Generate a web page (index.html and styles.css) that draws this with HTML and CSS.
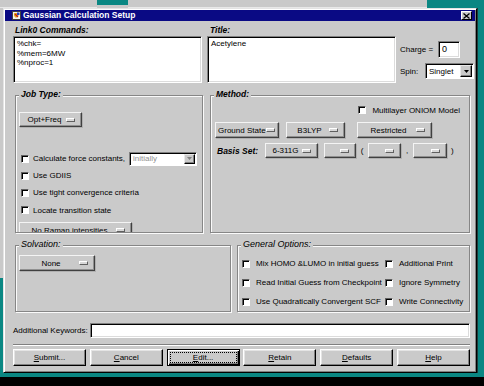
FILE: index.html
```html
<!DOCTYPE html>
<html>
<head>
<meta charset="utf-8">
<link rel="stylesheet" href="styles.css">
</head>
<body>
<div class="desktop">
  <div class="top-strip">
    <span class="ts-a"></span><span class="ts-b"></span><span class="ts-c"></span><span class="ts-d"></span>
  </div>
  <div class="middle">
    <div class="left-strip"></div>
    <div class="window">
      <div class="titlebar">
        <svg class="app-icon" width="9" height="9" viewBox="0 0 9 9">
          <rect x="0" y="0" width="9" height="9" fill="#f4f4f4"/>
          <rect x="0.5" y="0.5" width="8" height="8" fill="none" stroke="#404040" stroke-width="1"/>
          <path d="M2 2 L5 2 L7 4 L4 7 L2 5 Z" fill="#e8b020"/>
          <path d="M3 3 L6 6" stroke="#c01818" stroke-width="1.2"/>
          <rect x="5" y="1.5" width="2.5" height="2.5" fill="#2040c0"/>
        </svg>
        <span class="title">Gaussian Calculation Setup</span>
        <span class="close">
          <svg width="7" height="6" viewBox="0 0 7 6"><path d="M0.5 0.5 L6.5 5.5 M6.5 0.5 L0.5 5.5" stroke="#000" stroke-width="1.3"/></svg>
        </span>
      </div>

      <div class="top-section">
        <div class="text-col">
          <div class="lbl">Link0 Commands:</div>
          <div class="textarea">%chk=<br>%mem=6MW<br>%nproc=1</div>
        </div>
        <div class="text-col">
          <div class="lbl">Title:</div>
          <div class="textarea">Acetylene</div>
        </div>
        <div class="charge-col">
          <div class="charge-row"><span class="charge-lbl">Charge =</span><span class="field charge-in">0</span></div>
          <div class="spin-row"><span class="spin-lbl">Spin:</span>
            <span class="combo spin"><span class="combo-text">Singlet</span><span class="combo-btn"><svg width="5" height="3" viewBox="0 0 5 3"><path d="M0 0 H5 L2.5 3 Z" fill="#000"/></svg></span></span>
          </div>
        </div>
      </div>

      <div class="mid-section">
        <div class="group job">
          <div class="legend">Job Type:</div>
          <div class="job-body">
            <div class="opt opt-freq"><span class="opt-text">Opt+Freq</span><span class="ind"></span></div>
            <div class="check-row first">
              <span class="cb"></span><span class="cb-lbl">Calculate force constants,</span>
              <span class="combo initially"><span class="combo-text">initially</span><span class="combo-btn dis"><svg width="5" height="3" viewBox="0 0 5 3"><path d="M0 0 H5 L2.5 3 Z" fill="#808080"/></svg></span></span>
            </div>
            <div class="check-row"><span class="cb"></span><span class="cb-lbl">Use GDIIS</span></div>
            <div class="check-row"><span class="cb"></span><span class="cb-lbl">Use tight convergence criteria</span></div>
            <div class="check-row tall"><span class="cb"></span><span class="cb-lbl">Locate transition state</span></div>
            <div class="opt raman"><span class="opt-text">No Raman intensities</span><span class="ind"></span></div>
          </div>
        </div>
        <div class="group method">
          <div class="legend">Method:</div>
          <div class="onion-row"><span class="cb"></span><span class="cb-lbl">Multilayer ONIOM Model</span></div>
          <div class="method-row">
            <div class="opt ground"><span class="opt-text">Ground State</span><span class="ind"></span></div>
            <div class="opt b3lyp"><span class="opt-text">B3LYP</span><span class="ind"></span></div>
            <div class="opt restricted"><span class="opt-text">Restricted</span><span class="ind"></span></div>
          </div>
          <div class="basis-row">
            <span class="basis-lbl">Basis Set:</span>
            <div class="opt b-main"><span class="opt-text">6-311G</span><span class="ind"></span></div>
            <div class="opt b-blank1"><span class="opt-text"></span><span class="ind"></span></div>
            <span class="punct">(</span>
            <div class="opt b-blank2"><span class="opt-text"></span><span class="ind"></span></div>
            <span class="punct">,</span>
            <div class="opt b-blank3"><span class="opt-text"></span><span class="ind"></span></div>
            <span class="punct close-paren">)</span>
          </div>
        </div>
      </div>

      <div class="low-section">
        <div class="group solv">
          <div class="legend light">Solvation:</div>
          <div class="opt none"><span class="opt-text">None</span><span class="ind"></span></div>
        </div>
        <div class="group general">
          <div class="legend light">General Options:</div>
          <div class="gen-grid">
            <div class="gen-cell"><span class="cb"></span><span class="cb-lbl">Mix HOMO &amp;LUMO in initial guess</span></div>
            <div class="gen-cell"><span class="cb"></span><span class="cb-lbl">Additional Print</span></div>
            <div class="gen-cell"><span class="cb"></span><span class="cb-lbl">Read Initial Guess from Checkpoint</span></div>
            <div class="gen-cell"><span class="cb"></span><span class="cb-lbl">Ignore Symmetry</span></div>
            <div class="gen-cell"><span class="cb"></span><span class="cb-lbl">Use Quadratically Convergent SCF</span></div>
            <div class="gen-cell"><span class="cb"></span><span class="cb-lbl">Write Connectivity</span></div>
          </div>
        </div>
      </div>

      <div class="kw-row">
        <span class="kw-lbl">Additional Keywords:</span>
        <span class="field kw-in"></span>
      </div>
      <div class="separator"></div>
      <div class="btn-row">
        <span class="btn"><u>S</u>ubmit...</span>
        <span class="btn"><u>C</u>ancel</span>
        <span class="btn default"><u>E</u>dit...</span>
        <span class="btn"><u>R</u>etain</span>
        <span class="btn"><u>D</u>efaults</span>
        <span class="btn"><u>H</u>elp</span>
      </div>
    </div>
    <div class="right-strip"></div>
  </div>
  <div class="bottom-strip"></div>
</div>
</body>
</html>
```

FILE: styles.css
```css
* { box-sizing: border-box; }
html, body { margin: 0; padding: 0; }
body {
  width: 484px;
  height: 386px;
  overflow: hidden;
  background: #0a8783;
  font-family: "Liberation Sans", Arial, sans-serif;
  font-size: 8px;
  color: #000;
}

.desktop { display: flex; flex-direction: column; width: 484px; height: 386px; }

.top-strip { height: 8px; display: flex; }
.ts-a { width: 97px; background: #c9c9c9; border-bottom: 1px solid #e8e8e8; }
.ts-b { width: 31px; background: #0a8783; border-bottom: 3px solid #c9c9c9; }
.ts-c { width: 299px; background: #c9c9c9; border-bottom: 1px solid #e8e8e8; }
.ts-d { flex: 1; background: #0a8783; }

.middle { display: flex; height: 365px; }
.left-strip { width: 3px; background: linear-gradient(#c9c9c9 0 270px, #0a8783 270px); }
.right-strip { flex: 1; background: #0a8783; border-left: 1px solid #1d3a38; }
.bottom-strip { flex: 1; background: #000; border-top: 4px solid #0a8783; }

.window {
  width: 474px;
  height: 365px;
  background: #cacaca;
  border: 1px solid;
  border-color: #e4e4e4 #000 #000 #e4e4e4;
  box-shadow: inset 1px 1px #fff, inset -1px -1px #808080;
  padding: 1px;
}

.titlebar {
  height: 11px;
  background: #0a0a84;
  display: flex;
  align-items: center;
  padding-left: 7px;
  padding-right: 3px;
}
.app-icon { display: block; flex: none; }
.title {
  color: #fff;
  font-weight: bold;
  font-size: 8.5px;
  margin-left: 2px;
  flex: 1;
  line-height: 11px;
}
.close {
  width: 11px;
  height: 9px;
  background: #cacaca;
  border: 1px solid;
  border-color: #fff #000 #000 #fff;
  display: flex;
  align-items: center;
  justify-content: center;
}
.close svg { display: block; }

/* top */
.top-section { display: flex; margin-top: 3px; padding-left: 8px; }
.text-col { width: 189px; }
.text-col + .text-col { margin-left: 5px; }
.lbl, .legend, .basis-lbl {
  font-weight: bold;
  font-style: italic;
  font-size: 8.5px;
}
.lbl { height: 12px; line-height: 12px; padding-left: 2px; }
.text-col + .text-col .lbl { padding-left: 3px; }
.textarea {
  height: 47px;
  background: #fff;
  border: 1px solid;
  border-color: #808080 #fff #fff #808080;
  box-shadow: inset 1px 1px #000, inset -1px -1px #dcdcdc;
  padding: 2px 3px;
  line-height: 9.5px;
}

.field {
  background: #fff;
  border: 1px solid;
  border-color: #808080 #fff #fff #808080;
  box-shadow: inset 1px 1px #000, inset -1px -1px #dcdcdc;
}

.charge-col { margin-left: 4px; margin-top: 17px; }
.charge-row, .spin-row { display: flex; align-items: center; }
.charge-lbl { width: 38px; }
.charge-in { width: 22px; height: 17px; padding: 0 3px; line-height: 15px; font-size: 9px; }
.spin-row { margin-top: 5px; }
.spin-lbl { width: 25px; }

.combo {
  display: flex;
  align-items: stretch;
  background: #fff;
  border: 1px solid;
  border-color: #808080 #fff #fff #808080;
  box-shadow: inset 1px 1px #000;
  padding: 1px;
}
.combo-text { flex: 1; padding-left: 2px; display: flex; align-items: center; }
.combo-btn {
  width: 12px;
  background: #cacaca;
  border: 1px solid;
  border-color: #e8e8e8 #000 #000 #e8e8e8;
  box-shadow: inset -1px -1px #808080;
  display: flex;
  align-items: center;
  justify-content: center;
}
.combo-btn svg { display: block; }
.spin { width: 49px; height: 16px; }

/* groups */
.group {
  border: 1px solid #868686;
  box-shadow: inset 1px 1px #fafafa, 1px 1px #fafafa;
}
.legend {
  width: fit-content;
  margin: -7px 0 0 3px;
  padding: 0 2px;
  line-height: 10px;
  height: 10px;
  background: #cacaca;
}
.legend.light { font-weight: normal; font-size: 9px; }

.mid-section { display: flex; margin-top: 12px; padding-left: 10px; }
.job { width: 188px; height: 138px; }
.method { width: 260px; height: 138px; margin-left: 7px; }

.job-body { height: 133px; overflow: hidden; padding-left: 3px; }

.opt {
  display: flex;
  align-items: center;
  background: #cacaca;
  border: 1px solid;
  border-color: #f4f4f4 #404040 #404040 #f4f4f4;
  box-shadow: inset -1px -1px #909090, 1px 1px #b0b0b0;
  padding: 0 6px 0 3px;
}
.opt-text { flex: 1; text-align: center; white-space: nowrap; }
.ind {
  width: 9px;
  height: 4px;
  flex: none;
  border: 1px solid;
  border-color: #fff #606060 #606060 #fff;
  background: #d8d8d8;
}

.opt-freq { width: 63px; height: 15px; margin-top: 13px; }
.check-row { display: flex; align-items: center; height: 17px; padding-left: 2px; }
.check-row.first { margin-top: 23px; }
.check-row.tall { height: 18px; }
.cb {
  width: 8px;
  height: 8px;
  flex: none;
  background: #fff;
  border: 1px solid;
  border-color: #606060 #fff #fff #606060;
  box-shadow: inset 1px 1px #000;
}
.cb-lbl { margin-left: 4px; white-space: nowrap; }
.initially { width: 68px; height: 14px; margin-left: 4px; }
.initially .combo-text { color: #909090; }
.initially .combo-btn { width: 11px; }
.raman { width: 113px; height: 16px; margin-top: 3px; }

.onion-row {
  display: flex;
  justify-content: flex-end;
  align-items: center;
  height: 12px;
  margin-top: 5px;
  padding-right: 9px;
}
.onion-row .cb-lbl { margin-left: 6px; }
.method-row { display: flex; margin-top: 6px; padding-left: 4px; }
.method-row .opt { height: 16px; }
.ground { width: 64px; padding-left: 2px; padding-right: 3px; }
.ground .opt-text { text-align: left; }
.b3lyp { width: 59px; margin-left: 7px; }
.restricted { width: 75px; margin-left: 12px; }

.basis-row { display: flex; align-items: center; margin-top: 5px; padding-left: 6px; height: 15px; }
.basis-lbl { width: 48px; }
.basis-row .opt { height: 15px; }
.b-main { width: 53px; }
.b-blank1 { width: 32px; margin-left: 6px; }
.b-blank2 { width: 33px; }
.b-blank3 { width: 34px; }
.punct { width: 12px; text-align: center; }
.close-paren { width: auto; margin-left: 4px; }

.low-section { display: flex; margin-top: 12px; padding-left: 10px; }
.solv { width: 216px; height: 67px; }
.general { width: 233px; height: 67px; margin-left: 6px; }
.none { width: 76px; height: 16px; margin: 6px 0 0 3px; }

.gen-grid {
  display: grid;
  grid-template-columns: 143px auto;
  grid-auto-rows: 19px;
  margin-top: 5px;
  padding-left: 4px;
}
.gen-cell { display: flex; align-items: center; }
.gen-cell .cb-lbl { margin-left: 6px; }

.kw-row { display: flex; align-items: center; margin-top: 11px; padding-left: 8px; }
.kw-lbl { width: 77px; }
.kw-in { width: 380px; height: 15px; }

.separator {
  width: 457px;
  margin: 6px 0 0 8px;
  border-top: 1px solid #808080;
  border-bottom: 1px solid #fff;
}

.btn-row { display: flex; justify-content: space-between; margin-top: 3px; padding: 0 5px 0 8px; }
.btn {
  position: relative;
  width: 73px;
  height: 17px;
  display: flex;
  align-items: center;
  justify-content: center;
  background: #cacaca;
  border: 1px solid;
  border-color: #fff #000 #000 #fff;
  box-shadow: inset -1px -1px #808080, inset 1px 1px #e4e4e4;
}
.btn u { text-decoration-thickness: 1px; text-underline-offset: 1px; }
.btn.default {
  border-color: #000;
  box-shadow: inset 1px 1px #fff, inset -1px -1px #000, inset -2px -2px #808080;
}
.btn.default::after {
  content: "";
  position: absolute;
  inset: 2px;
  border: 1px dotted #000;
}
```
